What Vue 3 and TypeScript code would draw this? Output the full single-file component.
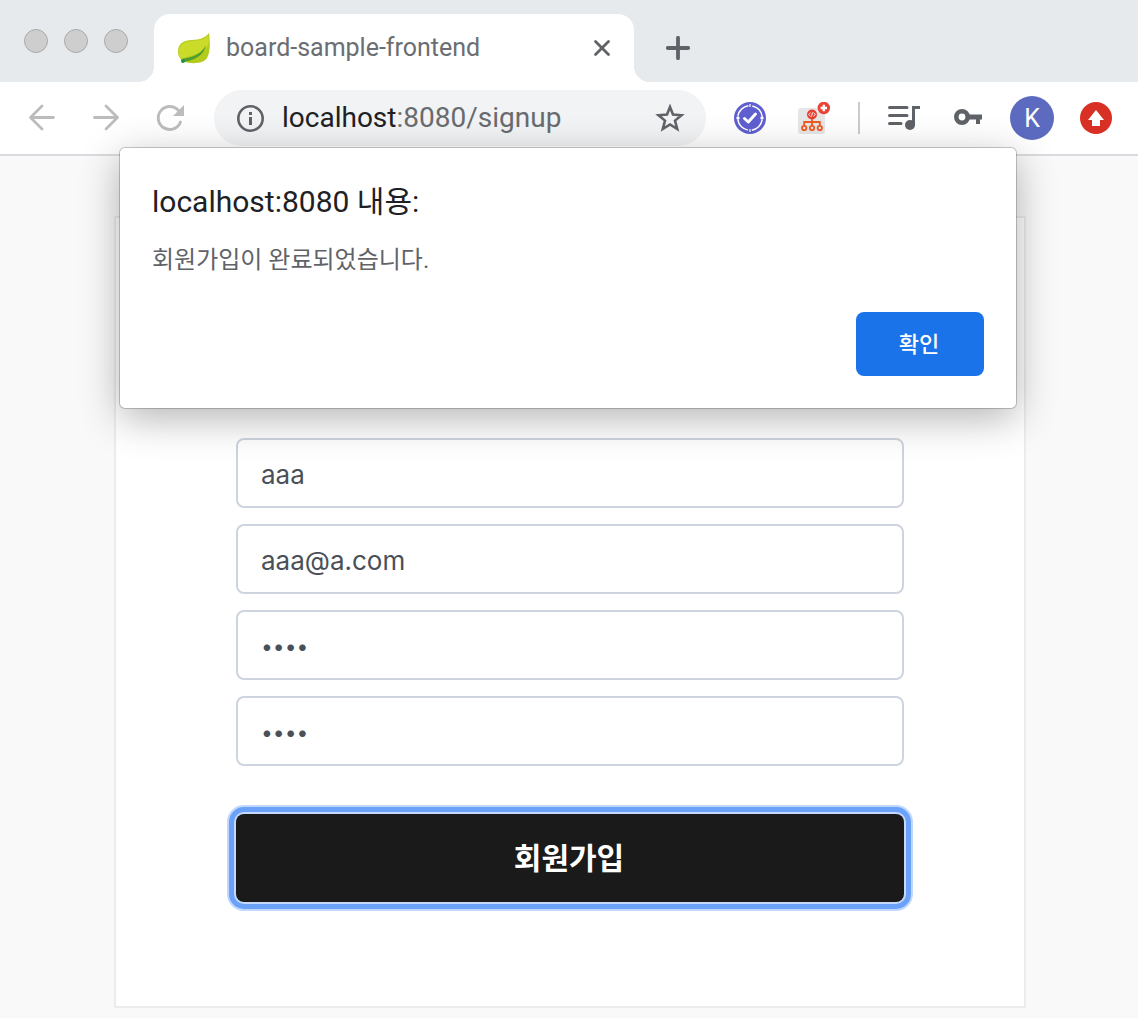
<script setup lang="ts">
import { ref } from 'vue'

interface Field {
  id: string
  label: string
  type: string
  value: string
}

const fields = ref<Field[]>([
  { id: 'username', label: '이름', type: 'text', value: 'aaa' },
  { id: 'email', label: '이메일', type: 'text', value: 'aaa@a.com' },
  { id: 'password', label: '비밀번호', type: 'password', value: 'aaaa' },
  { id: 'password-confirm', label: '비밀번호 확인', type: 'password', value: 'aaaa' },
])

const windowControls = ['닫기', '최소화', '확대']
</script>

<template>
  <div class="browser">
    <header class="tabstrip">
      <div class="lights">
        <button v-for="name in windowControls" :key="name" type="button" class="light" :aria-label="name"></button>
      </div>
      <div class="tab">
        <svg class="favicon" viewBox="0 0 32 32" aria-hidden="true">
          <path d="M31 1C32.500 12 32 21 29 26C26 31 17 32 9 30.500C3 29 0 25 0 19.500C0 11 6 8.500 14 8C22 7.500 27 6 31 1Z" fill="#b5cb1c" />
          <path d="M0.500 20C1 11 8 9.500 14 9C22 8.500 27 7 30.500 3.500C31 9 31 12 29 15C23 23 12 23 3 27C1 24 .5 22 .5 20Z" fill="#cbdb2a" />
          <path d="M28 13C26 23 17 28.500 4 30.500L3.500 27C14 25.500 23 22.500 28 13Z" fill="#4f9f2f" />
          <circle cx="5" cy="29" r="2" fill="#2a8f45" />
        </svg>
        <span class="tab-title">board-sample-frontend</span>
        <button type="button" class="plain" aria-label="탭 닫기">
          <svg width="20" height="20" viewBox="0 0 20 20"><path d="M3.500 3.500L16.500 16.500M16.500 3.500L3.500 16.500" stroke="#5f6368" stroke-width="2.800" stroke-linecap="round" /></svg>
        </button>
      </div>
      <button type="button" class="plain new-tab" aria-label="새 탭">
        <svg width="24" height="24" viewBox="0 0 24 24"><path d="M12 1.800V22.200M1.800 12H22.200" stroke="#5f6368" stroke-width="3.800" stroke-linecap="round" /></svg>
      </button>
    </header>

    <nav class="toolbar">
      <div class="history">
        <button type="button" class="plain" aria-label="뒤로">
          <svg width="32" height="32" viewBox="0 0 32 32"><path d="M27.500 15.500H5M16 4L4.500 15.500L16 27" fill="none" stroke="#babcbe" stroke-width="2.800" stroke-linecap="round" stroke-linejoin="round" /></svg>
        </button>
        <button type="button" class="plain" aria-label="앞으로">
          <svg width="32" height="32" viewBox="0 0 32 32"><path d="M4.500 15.500H27M16 4L27.500 15.500L16 27" fill="none" stroke="#babcbe" stroke-width="2.800" stroke-linecap="round" stroke-linejoin="round" /></svg>
        </button>
        <button type="button" class="plain" aria-label="새로고침">
          <svg width="32" height="32" viewBox="0 0 32 32">
            <path d="M26.500 20A11.500 11.500 0 1 1 24.500 8.500" fill="none" stroke="#babcbe" stroke-width="2.900" stroke-linecap="round" />
            <path d="M30 3V14H19Z" fill="#babcbe" />
          </svg>
        </button>
      </div>

      <div class="omnibox">
        <svg width="28" height="28" viewBox="0 0 28 28" aria-hidden="true">
          <circle cx="14.500" cy="14.500" r="12.200" fill="none" stroke="#5f6368" stroke-width="2.600" />
          <path d="M13 8H16V11H13ZM13 13H16V21H13Z" fill="#5f6368" />
        </svg>
        <span class="url"><b>localhost</b>:8080/signup</span>
        <button type="button" class="plain" aria-label="북마크">
          <svg width="32" height="32" viewBox="0 0 32 32"><path d="M16 5L19 12.500L27.500 13.200L21 18.600L23.200 27L16 22.500L8.800 27L11 18.600L4.500 13.200L13 12.500Z" fill="none" stroke="#5f6368" stroke-width="2.600" /></svg>
        </button>
      </div>

      <div class="extensions">
        <button type="button" class="plain" aria-label="확장 프로그램">
          <svg width="32" height="32" viewBox="0 0 32 32">
            <circle cx="16" cy="16" r="16" fill="#5f5fd0" />
            <circle cx="16" cy="16" r="12.300" fill="none" stroke="#fff" stroke-width="1.500" stroke-dasharray="15.300 4.020" stroke-dashoffset="-2" />
            <path d="M16 2V5M16 27V30" stroke="#fff" stroke-width="1.200" />
            <circle cx="4" cy="16" r="1.700" fill="#fff" />
            <circle cx="28" cy="16" r="1.700" fill="#fff" />
            <path d="M10.500 16.500L14.300 20L21.500 12" fill="none" stroke="#fff" stroke-width="3" stroke-linecap="round" stroke-linejoin="round" />
          </svg>
        </button>
        <button type="button" class="plain" aria-label="사이트맵">
          <svg width="32" height="32" viewBox="0 0 32 32">
            <rect x="0" y="6" width="27" height="26" rx="3" fill="#e6e6e6" />
            <circle cx="25.800" cy="6" r="6.200" fill="#ea4234" />
            <path d="M25.800 2.800V9.200M22.600 6H29" stroke="#fff" stroke-width="2.300" />
            <circle cx="14" cy="12.500" r="5" fill="#ea4030" />
            <path d="M12.600 10.500L10.700 12.500L12.600 14.500M15.400 10.500L17.300 12.500L15.400 14.500M14.500 10.500L13.500 14.500" fill="none" stroke="#fff" stroke-width=".9" />
            <path d="M14 17V23M6.200 23.500V20H21.800V23.500" fill="none" stroke="#ef5a24" stroke-width="1.900" />
            <circle cx="6.200" cy="26" r="2.200" fill="none" stroke="#f15a22" stroke-width="1.800" />
            <circle cx="14" cy="26" r="2.200" fill="none" stroke="#f15a22" stroke-width="1.800" />
            <circle cx="21.800" cy="26" r="2.200" fill="none" stroke="#f15a22" stroke-width="1.800" />
          </svg>
        </button>
      </div>
      <span class="divider"></span>
      <div class="extensions">
        <button type="button" class="plain" aria-label="미디어">
          <svg width="32" height="32" viewBox="0 0 32 32">
            <path d="M1.500 5.500H19M1.500 13.500H19M1.500 21.500H13" stroke="#5f6368" stroke-width="3" stroke-linecap="round" />
            <path d="M25.500 23V5.500H32" fill="none" stroke="#5f6368" stroke-width="3" />
            <circle cx="22" cy="23" r="5" fill="#5f6368" />
          </svg>
        </button>
        <button type="button" class="plain" aria-label="비밀번호 관리">
          <svg width="32" height="32" viewBox="0 0 32 32">
            <circle cx="10" cy="15" r="5.700" fill="none" stroke="#5f6368" stroke-width="4.600" />
            <path d="M16 12.500H30V17.500H28V22H24V17.500H16Z" fill="#5f6368" />
          </svg>
        </button>
      </div>
      <div class="account">
        <button type="button" class="avatar">K</button>
        <button type="button" class="plain" aria-label="업데이트">
          <svg width="32" height="32" viewBox="0 0 32 32">
            <circle cx="16" cy="16" r="16" fill="#d93025" />
            <path d="M16 8L24 18H20V24H12V18H8Z" fill="#fff" />
          </svg>
        </button>
      </div>
    </nav>

    <div class="dialog" role="alertdialog" aria-labelledby="dialog-title" aria-describedby="dialog-text">
      <h1 id="dialog-title">localhost:8080 내용:</h1>
      <p id="dialog-text">회원가입이 완료되었습니다.</p>
      <div class="actions">
        <button type="button" class="confirm">확인</button>
      </div>
    </div>

    <main class="page">
      <form class="card" @submit.prevent>
        <div class="fields">
          <input
            v-for="field in fields"
            :id="field.id"
            :key="field.id"
            v-model="field.value"
            :type="field.type"
            :aria-label="field.label"
            autocomplete="off"
          />
        </div>
        <button type="submit" class="submit">회원가입</button>
      </form>
    </main>
  </div>
</template>

<style>
body {
  margin: 0;
  background: #f9f9f9;
}
</style>

<style scoped>
* {
  box-sizing: border-box;
}

.browser {
  position: relative;
  min-height: 100vh;
  display: flex;
  flex-direction: column;
  font-family: Roboto, 'Noto Sans CJK KR', sans-serif;
  color: #202124;
}

button,
input {
  font-family: inherit;
  margin: 0;
}

svg {
  display: block;
  flex: none;
}

.plain {
  display: flex;
  align-items: center;
  justify-content: center;
  padding: 0;
  border: 0;
  background: none;
}

.tabstrip {
  display: flex;
  height: 82px;
  background: #e6eaed;
}

.lights {
  display: flex;
  align-items: center;
  gap: 16px;
  padding: 0 26px 0 24px;
}

.light {
  width: 24px;
  height: 24px;
  padding: 0;
  border: 1px solid #aaa;
  border-radius: 50%;
  background: #cecece;
}

.tab {
  position: relative;
  display: flex;
  align-items: center;
  gap: 16px;
  flex: 0 1 480px;
  margin-top: 14px;
  padding: 0 22px 0 24px;
  border-radius: 16px 16px 0 0;
  background: #fff;
}

.tab::before,
.tab::after {
  content: '';
  position: absolute;
  bottom: 0;
  width: 16px;
  height: 16px;
}

.tab::before {
  right: 100%;
  background: radial-gradient(circle at 0 0, transparent 16px, #fff 16px);
}

.tab::after {
  left: 100%;
  background: radial-gradient(circle at 100% 0, transparent 16px, #fff 16px);
}

.favicon {
  width: 32px;
  height: 32px;
}

.tab-title {
  flex: 1;
  font-size: 25px;
  line-height: 32px;
  color: #6a6e72;
  white-space: nowrap;
}

.new-tab {
  margin: 14px 0 0 32px;
}

.toolbar {
  display: flex;
  align-items: center;
  height: 74px;
  padding: 0 26px;
  border-bottom: 2px solid #dadbde;
  background: #fff;
}

.history,
.extensions {
  display: flex;
  gap: 32px;
}

.omnibox {
  display: flex;
  align-items: center;
  flex: 1;
  height: 56px;
  margin: 0 28px;
  padding: 0 20px 0 22px;
  border-radius: 28px;
  background: #f1f3f4;
}

.url {
  flex: 1;
  margin-left: 18px;
  font-size: 28px;
  line-height: 36px;
  color: #696b6e;
  white-space: nowrap;
}

.url b {
  font-weight: 400;
  color: #202124;
}

.divider {
  width: 2px;
  height: 32px;
  margin: 0 28px;
  background: #c9cbcd;
}

.account {
  display: flex;
  align-items: center;
  gap: 26px;
  margin-left: 26px;
}

.avatar {
  width: 44px;
  height: 44px;
  padding: 0;
  border: 0;
  border-radius: 50%;
  background: #5c6bc0;
  font-size: 25px;
  color: #fff;
}

.dialog {
  position: absolute;
  top: 148px;
  left: 120px;
  right: 122px;
  z-index: 1;
  padding: 32px;
  border-radius: 5px;
  background: #fff;
  box-shadow: 0 0 0 1px rgba(0, 0, 0, 0.2), 0 10px 40px rgba(0, 0, 0, 0.3);
}

.dialog h1 {
  margin: 0;
  font-size: 30px;
  font-weight: 400;
  line-height: 44px;
}

.dialog p {
  margin: 16px 0 32px;
  font-size: 24px;
  line-height: 40px;
  color: #5f6368;
}

.actions {
  display: flex;
  justify-content: flex-end;
}

.confirm {
  width: 128px;
  height: 64px;
  padding: 0 2px 4px 0;
  border: 0;
  border-radius: 8px;
  background: #1a73e8;
  font-size: 22px;
  font-weight: 500;
  color: #fff;
}

.page {
  flex: 1;
  padding: 60px 112px 10px 114px;
}

.card {
  padding: 220px 120px 104px;
  border: 2px solid #ececec;
  background: #fff;
}

.fields {
  display: flex;
  flex-direction: column;
  gap: 16px;
}

.fields input {
  width: 100%;
  height: 70px;
  padding: 2px 23px 0;
  border: 2px solid #ced4de;
  border-radius: 8px;
  outline: 0;
  background: #fff;
  font-family: Inter, 'Noto Sans CJK KR', sans-serif;
  font-size: 26px;
  color: #495057;
}

.fields input[type='password'] {
  font-size: 21px;
}

.submit {
  width: 100%;
  height: 88px;
  margin-top: 48px;
  padding: 0 2px 4px 0;
  border: 0;
  border-radius: 8px;
  background: #1a1a1a;
  box-shadow: 0 0 0 2px #c5d9fb, 0 0 0 7px #6ba1f8, 0 0 0 9px #c0d8fd;
  font-size: 30px;
  font-weight: 700;
  color: #fff;
}
</style>
